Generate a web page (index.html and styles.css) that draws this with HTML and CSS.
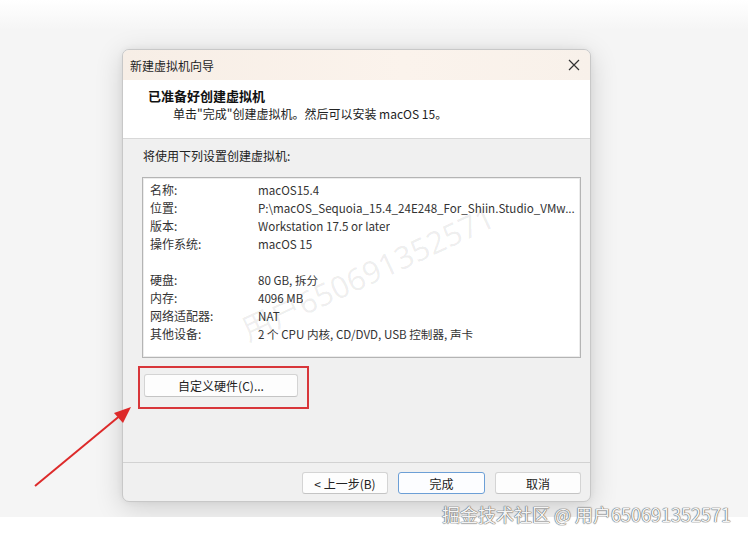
FILE: index.html
```html
<!DOCTYPE html>
<html lang="zh-CN">
<head>
<meta charset="utf-8">
<title>新建虚拟机向导</title>
<link rel="stylesheet" href="styles.css">
</head>
<body>
<div class="stage">
  <div class="dialog">
    <div class="titlebar">
      <span class="title">新建虚拟机向导</span>
      <svg class="close" width="12" height="12" viewBox="0 0 12 12"><path d="M1 1L11 11M11 1L1 11" stroke="#333" stroke-width="1.2" fill="none"/></svg>
    </div>
    <div class="header">
      <div class="h-title">已准备好创建虚拟机</div>
      <div class="h-sub">单击"完成"创建虚拟机。然后可以安装 macOS 15。</div>
    </div>
    <div class="body">
      <div class="label">将使用下列设置创建虚拟机:</div>
      <div class="listbox">
        <div class="row"><span class="k">名称:</span><span class="v">macOS15.4</span></div>
        <div class="row"><span class="k">位置:</span><span class="v">P:\macOS_Sequoia_15.4_24E248_For_Shiin.Studio_VMw...</span></div>
        <div class="row"><span class="k">版本:</span><span class="v">Workstation 17.5 or later</span></div>
        <div class="row"><span class="k">操作系统:</span><span class="v">macOS 15</span></div>
        <div class="row"></div>
        <div class="row"><span class="k">硬盘:</span><span class="v">80 GB, 拆分</span></div>
        <div class="row"><span class="k">内存:</span><span class="v">4096 MB</span></div>
        <div class="row"><span class="k">网络适配器:</span><span class="v">NAT</span></div>
        <div class="row"><span class="k">其他设备:</span><span class="v">2 个 CPU 内核, CD/DVD, USB 控制器, 声卡</span></div>
      </div>
      <div class="custom-wrap"><button class="btn custom">自定义硬件(C)...</button></div>
    </div>
    <div class="footer">
      <button class="btn back">&lt; 上一步(B)</button>
      <button class="btn finish">完成</button>
      <button class="btn cancel">取消</button>
    </div>
  </div>
</div>
<div class="diag-mark">用户650691352571</div>
<div class="redbox"></div>
<svg class="arrow" width="748" height="540" viewBox="0 0 748 540">
  <line x1="35" y1="486" x2="122" y2="414" stroke="#dd2a2a" stroke-width="2"/>
  <polygon points="131,407 114,413 123,423" fill="#dd2a2a"/>
</svg>
<div class="jj-mark">掘金技术社区 @ 用户650691352571</div>
</body>
</html>
```
FILE: styles.css
```css
* { box-sizing: border-box; }
html, body { margin: 0; padding: 0; background: #fff; }
body {
  width: 748px; height: 540px; position: relative; overflow: hidden;
  font-family: "Noto Sans CJK SC", "Noto Sans", sans-serif;
  font-size: 12px; color: #222;
}
.stage {
  height: 517px;
  overflow: hidden;
  padding: 49px 0 0 122px;
  background: linear-gradient(#ffffff 0px, #f5f5f5 30px);
}
.dialog {
  width: 469px; height: 453px;
  border: 1px solid #c8c8c8;
  border-radius: 7px;
  overflow: hidden;
  display: flex; flex-direction: column;
  background: #f0f0f0;
  box-shadow: 0 6px 28px rgba(0,0,0,0.16), 0 0 6px rgba(0,0,0,0.06);
}
.titlebar {
  height: 30px; flex: none;
  display: flex; align-items: center; justify-content: space-between;
  padding: 0 10px 0 7px;
  background: linear-gradient(90deg, #f7eee6, #fbf3ec 60%, #f8f1ea);
}
.title { font-size: 12px; color: #1e1e1e; }
.close { display: block; }
.header {
  height: 59px; flex: none;
  background: #fff;
  border-bottom: 1px solid #d8d8d8;
  padding: 6px 0 0 25px;
}
.h-title { font-weight: bold; font-size: 13px; line-height: 19px; color: #111; }
.h-sub { padding-left: 25px; line-height: 18px; color: #222; }
.body { flex: 1; padding: 8px 0 0 19px; }
.label { padding-left: 1px; line-height: 18px; color: #222; }
.listbox {
  margin-top: 12px;
  width: 439px; height: 181px;
  background: #fff;
  border: 1px solid #b4b4b4;
  box-shadow: inset 0 0 0 1px #ececec;
  padding: 3px 0 0 7px;
}
.row { display: flex; height: 18px; line-height: 18px; color: #333; white-space: nowrap; }
.k { width: 108px; flex: none; }
.v { overflow: hidden; font-size: 11.6px; }
.custom-wrap { padding: 16px 0 0 2px; }
.btn {
  font-family: inherit; font-size: 12px; color: #222;
  background: #fdfdfd;
  border: 1px solid #d4d4d4;
  border-bottom-color: #c4c4c4;
  border-radius: 3px;
  padding: 0; margin: 0;
}
.custom { width: 154px; height: 23px; }
.footer {
  height: 39px; flex: none;
  border-top: 1px solid #d2d2d2;
  display: flex; justify-content: flex-end; align-items: flex-start; gap: 10px;
  padding: 9px 9px 0 0;
}
.back { width: 86px; height: 22px; }
.finish { width: 87px; height: 22px; border: 1px solid #6c9fd6; background: #fcfdff; }
.cancel { width: 86px; height: 22px; }
.redbox {
  position: absolute; left: 138px; top: 366px; width: 171px; height: 43px;
  border: 2px solid #d8363a;
}
.arrow { position: absolute; left: 0; top: 0; pointer-events: none; }
.diag-mark {
  position: absolute; left: 243px; top: 314px;
  font-family: "Noto Sans", "Noto Sans CJK SC", sans-serif;
  font-size: 31px; line-height: 34px; color: rgba(0,0,0,0.07);
  transform: rotate(-25deg); transform-origin: left center;
  white-space: nowrap;
}
.jj-mark {
  position: absolute; left: 442px; top: 502px;
  font-size: 18px; line-height: 24px; white-space: nowrap;
  color: #f4f4f4;
  text-shadow: 0 0 1px #666, 0 0 1px #666, 0 0 1px #666;
}
```
